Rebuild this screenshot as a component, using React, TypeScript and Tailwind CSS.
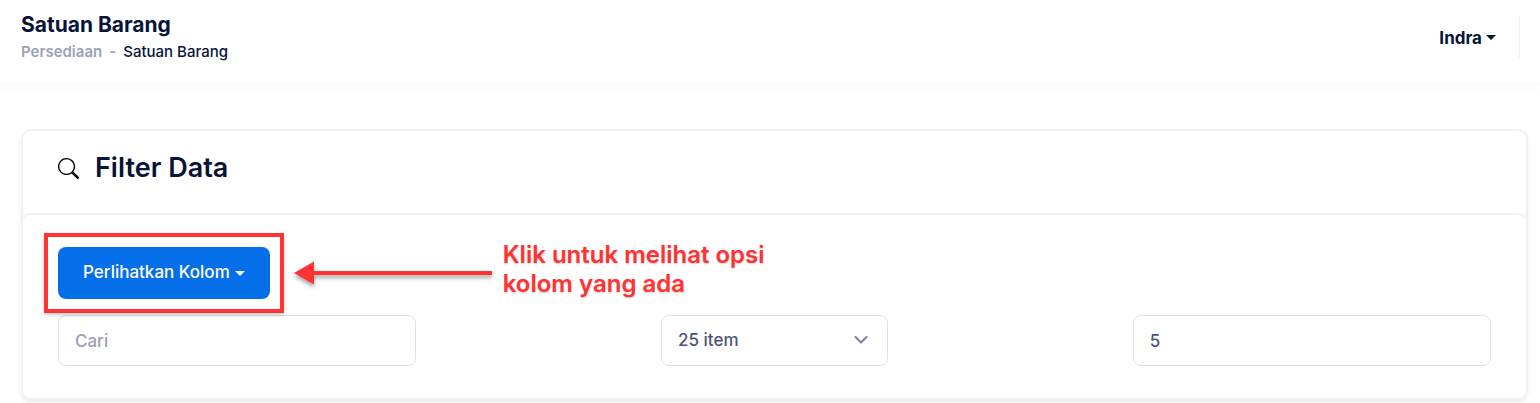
import { BsSearch } from "react-icons/bs";

function Caret() {
  return (
    <svg width="10" height="5" viewBox="0 0 10 5" fill="currentColor" aria-hidden="true">
      <path d="M0 0h10L5 5z" />
    </svg>
  );
}

function Header() {
  return (
    <header className="flex justify-between pl-[21px] pr-5 pb-[19px] pt-2.5 shadow-[0_6px_10px_rgba(0,0,0,0.02)]">
      <div>
        <h1 className="text-[21px] font-bold leading-[30px] text-[#071437]">Satuan Barang</h1>
        <nav aria-label="Breadcrumb">
          <ol className="flex gap-[7px] text-[15px] font-semibold leading-[23px]">
            <li>
              <a href="#persediaan" className="text-[#99a1b7]">Persediaan</a>
            </li>
            <li className="text-[#99a1b7]" aria-hidden="true">-</li>
            <li className="font-medium text-[#071437]">Satuan Barang</li>
          </ol>
        </nav>
      </div>
      <div className="mt-1.5 flex h-[42px] items-center border-r border-[#f1f1f4] pr-[23px]">
        <button type="button" className="flex items-center gap-1 pt-1 text-[17px] font-bold text-[#071437]">
          Indra
          <span className="pb-1">
            <Caret />
          </span>
        </button>
      </div>
    </header>
  );
}

function Hint() {
  return (
    <div className="absolute -top-[7px] left-full ml-6 flex items-start gap-[11px] whitespace-nowrap text-[#ff3333]">
      <svg
        width="198"
        height="24"
        viewBox="0 0 198 24"
        fill="currentColor"
        className="mt-[21px] overflow-visible drop-shadow-[0_3px_2px_rgba(0,0,0,0.35)]"
        aria-hidden="true"
      >
        <path d="M0 12L20 0.5V10H198V14H20V23.5z" />
      </svg>
      <p className="text-2xl font-semibold leading-[29px] [text-shadow:0_1px_2px_rgba(0,0,0,0.2)]">
        Klik untuk melihat opsi
        <br />
        kolom yang ada
      </p>
    </div>
  );
}

export default function App() {
  return (
    <div className="min-h-screen bg-white font-[Inter,sans-serif]">
      <Header />
      <main className="pl-[21px] pr-3 pt-[47px]">
        <section className="rounded-[10px] border-2 border-[#f1f1f2] bg-[#fafafa] shadow-[0_3px_4px_rgba(0,0,0,0.07)]">
          <div className="flex items-center gap-4 rounded-t-lg bg-white px-[35px] pb-[27px] pt-[19px]">
            <BsSearch className="size-[21px] text-black" aria-hidden="true" />
            <h2 className="text-[27px] font-semibold leading-9 text-[#071437]">Filter Data</h2>
          </div>
          <div className="rounded-lg border-t-2 border-[#f1f1f2] bg-white px-[35px] py-8">
            <div className="relative w-fit">
              <button
                type="button"
                className="flex h-[52px] items-center gap-[5px] rounded-lg bg-[#056ee9] px-[25px] text-[17px] font-medium text-white"
              >
                Perlihatkan Kolom
                <Caret />
              </button>
              <div className="pointer-events-none absolute -inset-3.5 border-4 border-[#ff3333] shadow-[0_2px_4px_rgba(0,0,0,0.2)]" />
              <Hint />
            </div>
            <form className="mt-4 flex justify-between text-[17px] font-medium text-[#4b5675]">
              <input
                type="text"
                aria-label="Cari"
                placeholder="Cari"
                className="h-[51px] w-1/4 rounded-lg border border-[#dbdfe9] px-4 placeholder:text-[#99a1b7]"
              />
              <div className="relative">
                <select
                  aria-label="Jumlah item"
                  defaultValue="25"
                  className="h-[51px] w-[227px] appearance-none rounded-lg border border-[#dbdfe9] bg-white px-4"
                >
                  <option value="10">10 item</option>
                  <option value="25">25 item</option>
                  <option value="50">50 item</option>
                </select>
                <svg
                  width="14"
                  height="8"
                  viewBox="0 0 14 8"
                  fill="none"
                  stroke="#78829d"
                  strokeWidth="2"
                  strokeLinecap="round"
                  strokeLinejoin="round"
                  className="pointer-events-none absolute right-5 top-[21px]"
                  aria-hidden="true"
                >
                  <path d="M1.5 1L7 6.5 12.5 1" />
                </svg>
              </div>
              <input
                type="text"
                aria-label="Jumlah"
                defaultValue="5"
                className="h-[51px] w-1/4 rounded-lg border border-[#dbdfe9] px-4"
              />
            </form>
          </div>
        </section>
      </main>
    </div>
  );
}
